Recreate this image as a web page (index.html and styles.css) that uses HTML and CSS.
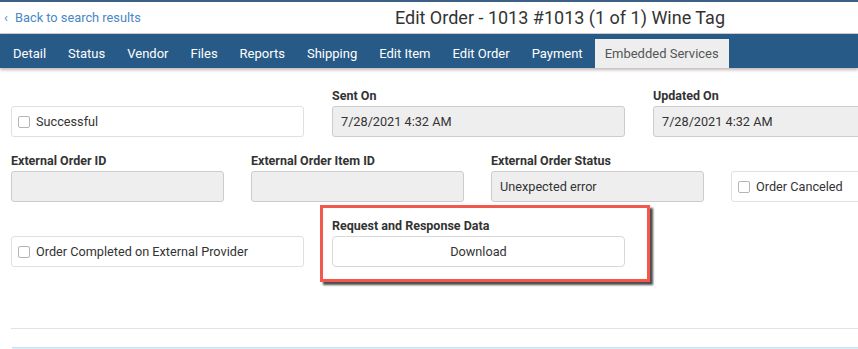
FILE: index.html
```html
<!DOCTYPE html>
<html lang="en">
<head>
    <meta charset="UTF-8">
    <meta name="viewport" content="width=device-width, initial-scale=1.0">
    <title>Edit Order - Embedded Services</title>
    <link rel="stylesheet" href="styles.css">
</head>
<body>
    <div class="header">
        <a class="back" href="#"><span class="chev">&lsaquo;</span> Back to search results</a>
        <h1 class="title">Edit Order - 1013 #1013 (1 of 1) Wine Tag</h1>
    </div>

    <div class="tabs">
        <a class="tab" href="#">Detail</a>
        <a class="tab" href="#">Status</a>
        <a class="tab" href="#">Vendor</a>
        <a class="tab" href="#">Files</a>
        <a class="tab" href="#">Reports</a>
        <a class="tab" href="#">Shipping</a>
        <a class="tab" href="#">Edit Item</a>
        <a class="tab" href="#">Edit Order</a>
        <a class="tab" href="#">Payment</a>
        <a class="tab active" href="#">Embedded Services</a>
    </div>

    <div class="content">
        <div class="row three">
            <div class="field">
                <div class="label"></div>
                <label class="check"><span class="box"></span>Successful</label>
            </div>
            <div class="field">
                <div class="label">Sent On</div>
                <div class="input">7/28/2021 4:32 AM</div>
            </div>
            <div class="field">
                <div class="label">Updated On</div>
                <div class="input">7/28/2021 4:32 AM</div>
            </div>
        </div>

        <div class="row four">
            <div class="field">
                <div class="label">External Order ID</div>
                <div class="input"></div>
            </div>
            <div class="field">
                <div class="label">External Order Item ID</div>
                <div class="input"></div>
            </div>
            <div class="field">
                <div class="label">External Order Status</div>
                <div class="input">Unexpected error</div>
            </div>
            <div class="field">
                <div class="label"></div>
                <label class="check"><span class="box"></span>Order Canceled</label>
            </div>
        </div>

        <div class="row three">
            <div class="field">
                <div class="label"></div>
                <label class="check"><span class="box"></span>Order Completed on External Provider</label>
            </div>
            <div class="field highlighted">
                <div class="label">Request and Response Data</div>
                <button class="btn">Download</button>
                <div class="mark"></div>
            </div>
        </div>

        <hr class="divider">
        <div class="alert"></div>
    </div>
</body>
</html>
```

FILE: styles.css
```css
body {
    font-family: Roboto, "Liberation Sans", sans-serif;
    margin: 0;
    color: #333;
    background-color: #fff;
    overflow: hidden;
}
.header {
    display: flex;
    align-items: center;
    height: 31px;
    border-top: 2px solid #3c5f86;
    border-bottom: 1px solid #cfcfcf;
    padding-left: 4px;
}
.back {
    color: #4a87c6;
    text-decoration: none;
    font-size: 12.8px;
}
.chev {
    margin-right: 4px;
}
.title {
    margin: 0 0 0 auto;
    padding-right: 133px;
    font-size: 18px;
    font-weight: normal;
    color: #333;
}
.tabs {
    display: flex;
    align-items: flex-end;
    height: 34px;
    background-color: #275a87;
    padding-left: 3px;
    box-shadow: 0 2px 3px rgba(80, 50, 50, 0.35);
}
.tab {
    display: flex;
    align-items: center;
    height: 29px;
    padding: 0 10px;
    margin-right: 2px;
    color: #fff;
    text-decoration: none;
    font-size: 13px;
}
.tab.active {
    background-color: #eeeeee;
    color: #555;
}
.content {
    padding: 20px 0 0 11px;
}
.row {
    display: grid;
    margin-bottom: 16px;
}
.row.three {
    grid-template-columns: repeat(3, 293px);
    column-gap: 28px;
}
.row.four {
    grid-template-columns: repeat(4, 213px);
    column-gap: 27px;
}
.field {
    position: relative;
}
.label {
    height: 15px;
    line-height: 15px;
    margin-bottom: 3px;
    font-size: 12.5px;
    font-weight: bold;
    color: #333;
}
.input, .check, .btn {
    box-sizing: border-box;
    height: 31px;
    border-radius: 3px;
    font-size: 12.7px;
    display: flex;
    align-items: center;
}
.input {
    background-color: #eeeeee;
    border: 1px solid #cccccc;
    padding-left: 8px;
}
.check {
    background-color: #fff;
    border: 1px solid #e0e0e0;
    padding-left: 6px;
}
.box {
    width: 10px;
    height: 10px;
    border: 1px solid #b5b5b5;
    border-radius: 2px;
    margin-right: 6px;
}
.btn {
    width: 100%;
    justify-content: center;
    background-color: #fff;
    border: 1px solid #d8d8d8;
    border-radius: 4px;
    color: #333;
    font-family: inherit;
}
.mark {
    position: absolute;
    left: -12px;
    top: -13px;
    width: 324px;
    height: 71px;
    border: 3px solid #f4574b;
    box-shadow: 3px 3px 2px rgba(0, 0, 0, 0.7);
}
.divider {
    border: 0;
    border-top: 1px solid #e2e2e2;
    margin: 61px 0 0 0;
}
.alert {
    margin: 18px 0 0 1px;
    height: 20px;
    background-color: #d9eef7;
    border-top: 1px solid #c7e6f2;
}
```
